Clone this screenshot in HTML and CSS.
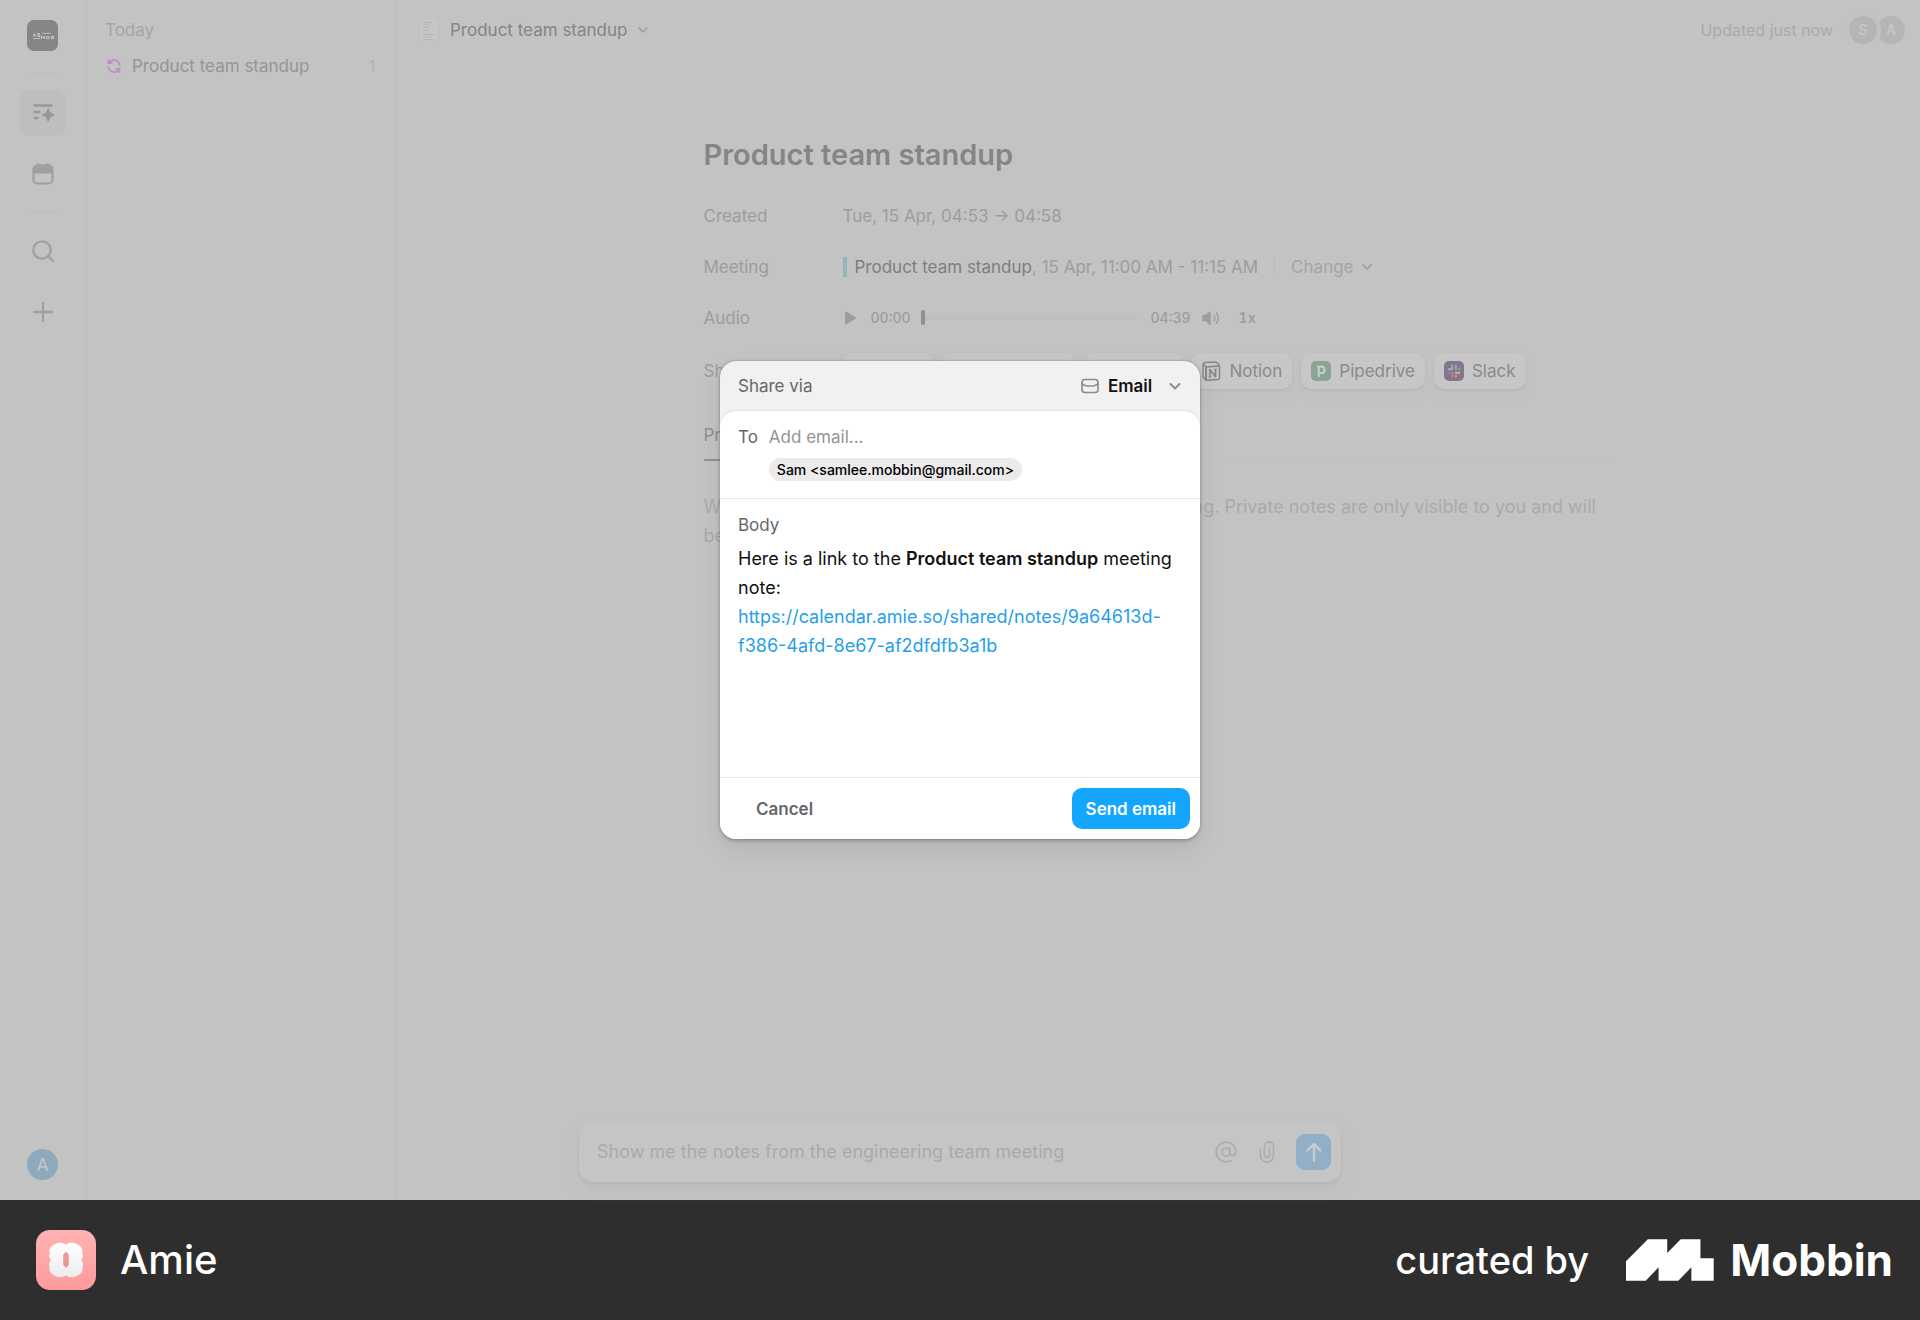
FILE: index.html
```html
<!DOCTYPE html>
<html lang="en">
<head>
    <meta charset="UTF-8">
    <meta name="viewport" content="width=device-width, initial-scale=1.0">
    <title>Amie - Product team standup</title>
    <link rel="stylesheet" href="styles.css">
</head>
<body>
    <div class="app">
        <nav class="rail">
            <button class="workspace" aria-label="Workspace">
                <svg width="30" height="30" viewBox="0 0 30 30" fill="none" stroke="#c4c4c4">
                    <path d="M5 15.500l1.500-3 1.500 3M5.500 14.500h2M12 12.500h-2.500v1.500H12v1.500H9.500"/>
                    <path d="M14 12.300h9M5 17.500h7" stroke-width="0.900"/>
                    <path d="M13.500 18v-3l1.500 2 1.500-2v3M18.500 15.500h2.500v2.200h-2.500zM23.500 15v3M23.500 15.300h2v2.400h-2M23.500 16.500h2"/>
                </svg>
            </button>
            <hr class="rail-line">
            <button class="rail-btn active" aria-label="Notes">
                <svg width="24" height="24" viewBox="0 0 24 24" fill="none" stroke="currentColor" stroke-width="2.300" stroke-linecap="round">
                    <path d="M3.500 4.500h17M3.500 11h5M3.500 17h3"/>
                    <path d="M17.200 8.200c.8 3.600 2 4.900 5.600 5.800-3.600.9-4.800 2.200-5.600 5.800-.8-3.600-2-4.900-5.600-5.800 3.600-.9 4.800-2.200 5.600-5.800z" fill="currentColor" stroke-width="1.500" stroke-linejoin="round"/>
                </svg>
            </button>
            <button class="rail-btn" aria-label="Calendar">
                <svg width="24" height="24" viewBox="0 0 24 24" fill="none" stroke="currentColor" stroke-width="2.200">
                    <rect x="2.500" y="3.500" width="19" height="18" rx="4"/>
                    <path d="M3 5.500L5.500 3.500h13L21 5.500v5H3z" fill="currentColor"/>
                    <path d="M7.500 2v3M16.500 2v3" stroke-linecap="round"/>
                </svg>
            </button>
            <hr class="rail-line">
            <button class="rail-btn" aria-label="Search">
                <svg width="24" height="24" viewBox="0 0 24 24" fill="none" stroke="currentColor" stroke-width="2.300" stroke-linecap="round">
                    <circle cx="11" cy="11" r="8.700"/>
                    <path d="M17.300 17.300l4.500 4.700"/>
                </svg>
            </button>
            <button class="rail-btn" aria-label="Add">
                <svg width="24" height="24" viewBox="0 0 24 24" fill="none" stroke="currentColor" stroke-width="2.300" stroke-linecap="round">
                    <path d="M12 3v18M3 12h18"/>
                </svg>
            </button>
            <button class="account">A</button>
        </nav>

        <aside class="notes">
            <h2>Today</h2>
            <a class="note" href="#standup">
                <svg width="18" height="18" viewBox="0 0 18 18" fill="none" stroke="#c08fc8" stroke-width="1.800" stroke-linecap="round" stroke-linejoin="round">
                    <path d="M3.500 3v3.200h3.200M3.800 6c1.600-3.200 6.200-4.200 9.200-1.500 1 1 1.600 2.200 1.700 3.500M14.500 15v-3.200h-3.200M14.200 12c-1.600 3.200-6.200 4.200-9.200 1.500-1-1-1.600-2.200-1.700-3.500"/>
                </svg>
                <span>Product team standup</span>
                <span class="count">1</span>
            </a>
        </aside>

        <main class="main">
            <header class="topbar">
                <svg class="doc" width="20" height="26" viewBox="0 0 20 26" fill="none" stroke="#b6b6b6">
                    <rect x="1" y="1" width="18" height="24" rx="3" fill="#c6c6c6" stroke="#c0c0c0"/>
                    <path d="M4 5.500h9M4 8h8M4 10.500h6M4 13.500h5M4 17.500h12M4 20h9M4 22.500h8"/>
                </svg>
                <button class="crumb">
                    Product team standup
                    <svg width="12" height="12" viewBox="0 0 12 12" fill="none" stroke="#9d9d9d" stroke-width="1.600" stroke-linecap="round" stroke-linejoin="round"><path d="M2 4l4 4 4-4"/></svg>
                </button>
                <span class="updated">Updated just now</span>
                <div class="people">
                    <span class="person front">S</span>
                    <span class="person">A</span>
                </div>
            </header>

            <article class="page" id="standup">
                <h1>Product team standup</h1>
                <div class="props">
                    <div class="prop">
                        <span class="label">Created</span>
                        <span>Tue, 15 Apr, 04:53 → 04:58</span>
                    </div>
                    <div class="prop">
                        <span class="label">Meeting</span>
                        <span class="event"><strong>Product team standup</strong>, 15 Apr, 11:00 AM - 11:15 AM</span>
                        <button class="change">
                            Change
                            <svg width="12" height="12" viewBox="0 0 12 12" fill="none" stroke="currentColor" stroke-width="2" stroke-linecap="round" stroke-linejoin="round"><path d="M2 4l4 4 4-4"/></svg>
                        </button>
                    </div>
                    <div class="prop">
                        <span class="label">Audio</span>
                        <div class="player">
                            <button aria-label="Play">
                                <svg width="14" height="16" viewBox="0 0 14 16" fill="currentColor" stroke="currentColor" stroke-width="2" stroke-linejoin="round"><path d="M3 2.500v11L12 8z"/></svg>
                            </button>
                            <span class="time">00:00</span>
                            <input type="range" min="0" max="279" value="0" aria-label="Position">
                            <span class="time">04:39</span>
                            <button aria-label="Volume">
                                <svg width="20" height="16" viewBox="0 0 20 16" fill="none" stroke="currentColor" stroke-width="1.500" stroke-linecap="round" stroke-linejoin="round">
                                    <path d="M2 5.500h3l4-3.500v12l-4-3.500H2z" fill="currentColor"/>
                                    <path d="M13 5.500c1 1.500 1 3.500 0 5M15.500 3c2.200 3 2.200 7 0 10"/>
                                </svg>
                            </button>
                            <button class="speed">1x</button>
                        </div>
                    </div>
                    <div class="prop share">
                        <span class="label">Share</span>
                        <div class="chips">
                            <button class="chip">
                                <svg width="20" height="20" viewBox="0 0 20 20" fill="none" stroke="currentColor" stroke-width="1.500"><rect x="2" y="3.500" width="16" height="13" rx="3"/><path d="M2 8c5 3 11 3 16 0"/></svg>
                                Email
                            </button>
                            <button class="chip">
                                <svg width="20" height="20" viewBox="0 0 20 20"><rect width="20" height="20" rx="5" fill="#a0887f"/></svg>
                                Salesforce
                            </button>
                            <button class="chip">
                                <svg width="20" height="20" viewBox="0 0 20 20"><rect width="20" height="20" rx="5" fill="#8a8ca8"/></svg>
                                Linear
                            </button>
                            <button class="chip">
                                <svg width="20" height="20" viewBox="0 0 20 20" fill="none" stroke="#858585" stroke-width="1.400" stroke-linejoin="round">
                                    <path d="M2 3l3 3v13.200l-3-3.500zM2 3l1.500-1.500L15 1l3.500 3"/>
                                    <path d="M5 6l13.500-1v12.500l-1 1L5 19.200z"/>
                                    <path d="M9 16V8.800l5.500 7V8.600M7.800 8.800h1.800M13.300 8.600h2.400M7.800 16h2.400" stroke-width="1.500"/>
                                </svg>
                                Notion
                            </button>
                            <button class="chip">
                                <svg width="20" height="20" viewBox="0 0 20 20" fill="none">
                                    <rect width="20" height="20" rx="5" fill="#87a494"/>
                                    <path d="M6 5.500h1.700V16M7.500 8.500c.3-2 1.400-3 3-3 1.800 0 3 1.400 3 3.300s-1.200 3.400-3 3.400c-1.600 0-2.700-1-3-2.700" stroke="#c9cdca" stroke-width="2"/>
                                </svg>
                                Pipedrive
                            </button>
                            <button class="chip">
                                <svg width="20" height="20" viewBox="0 0 20 20" fill="none" stroke-width="2.200" stroke-linecap="round">
                                    <rect width="20" height="20" rx="5" fill="#86748a"/>
                                    <path d="M8.200 4.700v3M4.700 8.200h3.500" stroke="#86b3c1"/>
                                    <path d="M11.800 4.700v3.500M15.300 8.200h-.2" stroke="#84b09c"/>
                                    <path d="M11.800 11.800h3.500M11.800 15.300v-.2" stroke="#c6b07f"/>
                                    <path d="M8.200 11.800v3.500M4.700 11.800h.2" stroke="#bd7f92"/>
                                </svg>
                                Slack
                            </button>
                        </div>
                    </div>
                </div>
                <div class="tabs">
                    <button class="tab">Private notes</button>
                </div>
                <p class="hint">Write your personal notes here before or during the meeting. Private notes are only visible to you and will be used to improve the summary.</p>
            </article>
        </main>

        <form class="composer">
            <input type="text" placeholder="Show me the notes from the engineering team meeting" aria-label="Ask about your notes">
            <button type="button" aria-label="Mention">
                <svg width="24" height="24" viewBox="0 0 24 24" fill="none" stroke="currentColor" stroke-width="1.800" stroke-linecap="round">
                    <circle cx="12" cy="12" r="4"/>
                    <path d="M16 8v5.200c0 3.600 5.800 3.300 5.800-1.200A9.800 9.800 0 1 0 17 20.400"/>
                </svg>
            </button>
            <button type="button" aria-label="Attach">
                <svg width="24" height="24" viewBox="0 0 24 24" fill="none" stroke="currentColor" stroke-width="1.800" stroke-linecap="round">
                    <path d="M5.500 9v6.500a6.500 6.500 0 0 0 13 0V6.500a4.500 4.500 0 0 0-9 0v8.500a2.500 2.500 0 0 0 5 0V8"/>
                </svg>
            </button>
            <button type="button" class="ask" aria-label="Send">
                <svg width="24" height="24" viewBox="0 0 24 24" fill="none" stroke="currentColor" stroke-width="2.400" stroke-linecap="round" stroke-linejoin="round">
                    <path d="M12 20.500V4M5.500 10.500L12 4l6.500 6.500"/>
                </svg>
            </button>
        </form>

        <div class="overlay">
            <div class="modal" role="dialog" aria-label="Share via email">
                <div class="modal-head">
                    <label for="channel">Share via</label>
                    <div class="picker">
                        <svg width="20" height="20" viewBox="0 0 20 20" fill="none" stroke="#8b8b8b" stroke-width="1.600" stroke-linecap="round">
                            <rect x="2" y="3.500" width="16" height="13" rx="3"/>
                            <path d="M2 7.500c1 1.300 1.500 1.600 3 2 3.300.7 6.700.7 10 0 1.500-.4 2-.7 3-2"/>
                        </svg>
                        <select id="channel">
                            <option>Email</option>
                        </select>
                        <svg class="arrow" width="14" height="14" viewBox="0 0 14 14" fill="none" stroke="#8b8b8b" stroke-width="2" stroke-linecap="round" stroke-linejoin="round"><path d="M2.500 5L7 9.500 11.500 5"/></svg>
                    </div>
                </div>
                <div class="modal-card">
                    <div class="to">
                        <label for="to">To</label>
                        <input id="to" type="email" placeholder="Add email...">
                        <span class="recipient">Sam &lt;samlee.mobbin@gmail.com&gt;</span>
                    </div>
                    <div class="message">
                        <span class="message-label" id="body-label">Body</span>
                        <div class="message-text" role="textbox" aria-labelledby="body-label" contenteditable="true">Here is a link to the <strong>Product team standup</strong> meeting note: <a href="#standup">https://calendar.amie.so/shared/notes/9a64613d-f386-4afd-8e67-af2dfdfb3a1b</a></div>
                    </div>
                    <div class="actions">
                        <button class="cancel">Cancel</button>
                        <button class="send">Send email</button>
                    </div>
                </div>
            </div>
        </div>
    </div>

    <footer class="credit">
        <svg width="60" height="60" viewBox="0 0 60 60">
            <defs>
                <linearGradient id="pink" x1="0" y1="0" x2="0" y2="1">
                    <stop offset="0" stop-color="#ffb3b3"/>
                    <stop offset="1" stop-color="#ff9a9c"/>
                </linearGradient>
                <linearGradient id="petal" x1="0" y1="0" x2="0" y2="1">
                    <stop offset="0" stop-color="#ffffff"/>
                    <stop offset="1" stop-color="#ececec"/>
                </linearGradient>
            </defs>
            <rect width="60" height="60" rx="14" fill="url(#pink)"/>
            <path fill="#e58486" opacity="0.500" d="M30 16c4-3 8-3 11-1 4 1 6 5 5 9 2 3 1 5-1 7 2 4 2 8-1 11-2 5-9 7-14 4-5 3-12 1-14-4-3-3-3-7-1-11-2-2-3-4-1-7-1-4 1-8 5-9 3-2 7-2 11 1z"/>
            <path fill="url(#petal)" fill-rule="evenodd" d="M30 14.500c3-2.300 8-2.500 11-.3 4.200 1.300 6.300 5.300 5.300 9.300 1.200 2.200.8 4.600-1.300 6.500 2.100 2 2.600 4.500 1.500 7 .7 3.500-1.300 7.200-5 8.400-3.300 2.600-8.200 2.500-11.500.1-3.300 2.400-8.200 2.500-11.500-.1-3.700-1.200-5.700-4.900-5-8.400-1.100-2.500-.6-5 1.500-7-2.100-1.900-2.500-4.300-1.300-6.500-1-4 1.100-8 5.300-9.300 3-2.200 8-2 11 .3zM30 21.500l-2.800 3.200v10l2.800 3.300 2.800-3.300v-10z"/>
        </svg>
        <span class="app-name">Amie</span>
        <span class="by">curated by</span>
        <svg width="88" height="42" viewBox="0 0 87.500 41.500" fill="#fff">
            <path d="M21.700 0H41v13.800L54.400 0H74v19h13.200v22.500H65V28L52 41.500H32.400V28L19.600 41.500H0V22z"/>
        </svg>
        <span class="mobbin">Mobbin</span>
    </footer>
</body>
</html>
```
FILE: styles.css
```css
* {
    box-sizing: border-box;
}
body {
    margin: 0;
    min-height: 100vh;
    display: flex;
    flex-direction: column;
    font-family: Inter, 'Liberation Sans', sans-serif;
    font-size: 17px;
    line-height: 20px;
    color: #9d9d9d;
    background: #c3c3c3;
}
button, input, select {
    font: inherit;
    color: inherit;
    background: none;
    border: 0;
    margin: 0;
    padding: 0;
}
button {
    display: inline-flex;
    align-items: center;
    justify-content: center;
    cursor: pointer;
}
input {
    min-width: 0;
    outline: none;
}
svg {
    flex: none;
}
.app {
    position: relative;
    flex: 1;
    display: grid;
    grid-template-columns: 87px 310px 1fr;
    grid-template-rows: 1fr;
}

/* left rail */
.rail {
    grid-row: 1;
    grid-column: 1;
    display: flex;
    flex-direction: column;
    align-items: center;
    padding: 20px 0;
    border-right: 2px solid #bfbfbf;
    color: #a0a0a0;
}
.workspace {
    width: 31px;
    height: 31px;
    border-radius: 7px;
    background: #868686;
}
.rail-line {
    width: 32px;
    margin: 22px 0 16px;
    border: 0;
    border-top: 1px solid #bdbdbd;
}
.rail-btn + .rail-line {
    margin: 15px 0;
}
.rail-btn {
    width: 46px;
    height: 46px;
    border-radius: 10px;
}
.rail-btn + .rail-btn {
    margin-top: 15px;
}
.rail-btn.active {
    background: #bebebe;
    color: #989898;
}
.account {
    width: 31px;
    height: 31px;
    margin-top: auto;
    border-radius: 50%;
    background: #8da9bb;
    color: #c3cacf;
}

/* list of notes */
.notes {
    grid-row: 1;
    grid-column: 2;
    padding: 20px;
    padding-left: 18px;
    border-right: 2px solid #bfbfbf;
}
.notes h2 {
    margin: 0 0 16px;
    font-size: 17px;
    font-weight: 400;
    color: #a5a5a5;
}
.note {
    display: flex;
    align-items: center;
    gap: 9px;
    color: #959595;
    text-decoration: none;
}
.count {
    margin-left: auto;
    font-size: 15px;
    color: #adadad;
}

/* note page */
.main {
    grid-row: 1;
    grid-column: 3;
}
.topbar {
    display: flex;
    align-items: center;
    height: 60px;
    padding: 0 15px 0 22px;
}
.crumb {
    gap: 10px;
    margin-left: 11px;
    color: #848484;
}
.updated {
    margin-left: auto;
    font-size: 16px;
    color: #aaa;
}
.people {
    display: flex;
    margin-left: 16px;
}
.person {
    width: 28px;
    height: 28px;
    border-radius: 50%;
    background: #b5b5b5;
    color: #c6c6c6;
    font-size: 14px;
    font-weight: 600;
    line-height: 28px;
    text-align: center;
}
.person.front {
    z-index: 1;
    box-shadow: 0 0 0 4px #c3c3c3;
}
.page {
    width: 910px;
    max-width: 100%;
    margin: 75px auto 0;
}
.page h1 {
    margin: 0 0 22px;
    font-size: 29px;
    font-weight: 600;
    line-height: 40px;
    color: #858585;
}
.props {
    display: flex;
    flex-direction: column;
    gap: 14px;
}
.prop {
    display: flex;
    align-items: center;
    min-height: 37px;
}
.share {
    margin-top: 2px;
}
.label {
    flex: none;
    width: 139px;
}
.event {
    padding-left: 8px;
    border-left: 4px solid #8fb7c0;
}
.event strong {
    font-weight: 400;
    color: #7e7e7e;
}
.change {
    gap: 7px;
    margin-left: 16px;
    padding-left: 16px;
    border-left: 1px solid #bababa;
    color: #a5a5a5;
}
.player {
    display: flex;
    align-items: center;
}
.player .time {
    margin: 0 10px 0 14px;
    font-size: 14px;
    font-weight: 500;
    font-variant-numeric: tabular-nums;
}
.player input {
    appearance: none;
    width: 216px;
    height: 16px;
    background: linear-gradient(#bebebe, #bebebe) center / 100% 5px no-repeat;
}
.player input::-webkit-slider-thumb {
    appearance: none;
    width: 4px;
    height: 15px;
    border-radius: 2px;
    background: #8f8f8f;
}
.speed {
    margin-left: 18px;
    font-size: 14px;
    font-weight: 600;
    font-variant-numeric: tabular-nums;
}
.chips {
    display: flex;
    gap: 9px;
}
.chip {
    gap: 8px;
    height: 36px;
    padding: 0 10px;
    border-radius: 10px;
    background: #c7c7c7;
    box-shadow: 0 1px 2px #b3b3b3, 0 4px 8px #bebebe;
    color: #8a8a8a;
}
.tabs {
    margin-top: 35px;
    border-bottom: 1px solid #bebebe;
}
.tab {
    height: 37px;
    padding-bottom: 13px;
    border-bottom: 2px solid #929292;
    color: #8f8f8f;
}
.hint {
    margin: 30px 0 0;
    font-size: 18px;
    line-height: 29px;
    color: #aaa;
}

/* question box, centred on the whole window */
.composer {
    grid-row: 1;
    grid-column: 1 / -1;
    align-self: end;
    justify-self: center;
    display: flex;
    align-items: center;
    gap: 17px;
    width: 762px;
    max-width: 100%;
    height: 60px;
    margin-bottom: 18px;
    padding: 0 10px 0 18px;
    border-radius: 14px;
    background: #c5c5c5;
    box-shadow: 0 2px 3px #b6b6b6, 0 6px 14px #bcbcbc;
    color: #aeaeae;
}
.composer input {
    flex: 1;
    font-size: 18px;
}
.composer input::placeholder {
    color: #aaa;
}
.ask {
    width: 35px;
    height: 36px;
    border-radius: 9px;
    background: #91b0c8;
    color: #c9cdd0;
}

/* share dialog */
.overlay {
    position: absolute;
    inset: 0;
    z-index: 2;
    display: flex;
    align-items: center;
    justify-content: center;
}
.modal {
    width: 480px;
    border-radius: 16px;
    background: #f1f1f1;
    box-shadow: 0 0 2px rgba(0,0,0,0.3), 0 2px 4px rgba(0,0,0,0.2), 0 10px 24px rgba(0,0,0,0.08);
    color: #666;
}
.modal-head {
    display: flex;
    align-items: center;
    justify-content: space-between;
    height: 50px;
    padding: 0 18px;
}
.picker {
    display: flex;
    align-items: center;
    gap: 8px;
}
.picker select {
    appearance: none;
    outline: none;
    font-weight: 600;
    color: #111;
}
.arrow {
    margin-left: 7px;
}
.modal-card {
    border-radius: 16px;
    background: #fff;
    box-shadow: 0 -1px 1px #e2e2e2;
}
.to {
    display: grid;
    grid-template-columns: auto 1fr;
    gap: 11px;
    padding: 16px 18px 17px;
    border-bottom: 1px solid #e8e8e8;
}
.to input::placeholder {
    color: #949494;
}
.recipient {
    grid-column: 2;
    justify-self: start;
    padding: 0 8px;
    border-radius: 12px;
    background: #ebebeb;
    font-size: 14px;
    font-weight: 500;
    line-height: 23px;
    color: #000;
}
.message {
    padding: 16px 18px;
}
.message-text {
    min-height: 217px;
    margin-top: 9px;
    outline: none;
    font-size: 18px;
    line-height: 29px;
    color: #111;
}
.message-text strong {
    font-weight: 600;
}
.message-text a {
    color: #279fe8;
    text-decoration: none;
}
.actions {
    display: flex;
    align-items: center;
    justify-content: space-between;
    padding: 10px;
    border-top: 1px solid #e8e8e8;
    font-weight: 600;
}
.cancel {
    height: 41px;
    padding: 0 26px;
}
.send {
    height: 41px;
    padding: 0 14px;
    border-radius: 10px;
    background: #14a5ff;
    color: #fff;
}

/* credit strip */
.credit {
    display: flex;
    align-items: center;
    height: 120px;
    padding: 0 27px 0 36px;
    background: #2e2e2e;
    color: #fff;
    font-size: 38px;
    font-weight: 500;
    line-height: 48px;
}
.app-name {
    margin-left: 24px;
    font-size: 40px;
}
.by {
    margin: 0 37px 0 auto;
}
.mobbin {
    margin-left: 16px;
    font-size: 44px;
    font-weight: 700;
}
```
